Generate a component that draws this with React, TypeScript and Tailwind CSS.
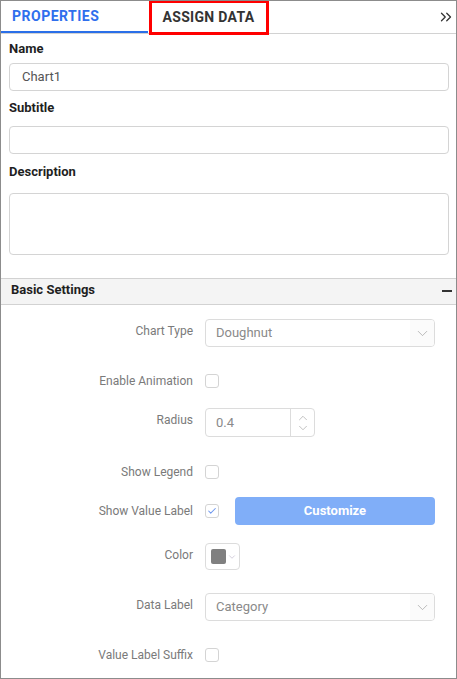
import { ChevronDown, ChevronUp, Check, ChevronsRight } from "lucide-react";

function Checkbox({ checked = false, className = "" }: { checked?: boolean; className?: string }) {
  return (
    <div
      className={`w-[14px] h-[14px] rounded-[3px] border border-[#d4d4d4] bg-white flex items-center justify-center ${className}`}
    >
      {checked && <Check size={10} strokeWidth={2.5} className="text-[#6f98ef]" />}
    </div>
  );
}

function Select({ value }: { value: string }) {
  return (
    <div className="w-[230px] h-[28px] rounded-[4px] border border-[#dcdcdc] bg-white flex items-stretch overflow-hidden">
      <div className="flex-1 pl-[10px] flex items-center text-[13px] text-[#8a8a8a]">{value}</div>
      <div className="w-[24px] bg-[#fbfbfb] flex items-center justify-center">
        <ChevronDown size={17} strokeWidth={1} className="text-[#a0a0a0]" />
      </div>
    </div>
  );
}

function Row({
  label,
  labelPad,
  mt,
  children,
}: {
  label: string;
  labelPad: string;
  mt: string;
  children: React.ReactNode;
}) {
  return (
    <div className={`flex items-start ${mt}`}>
      <div className={`w-[192px] text-right text-[12px] leading-[16px] text-[#7a7a7a] ${labelPad}`}>{label}</div>
      <div className="ml-[12px] flex items-start">{children}</div>
    </div>
  );
}

export default function App() {
  return (
    <div
      className="relative w-[457px] h-[679px] border border-[#8c8c8c] bg-white overflow-hidden"
      style={{ fontFamily: "Roboto, 'Noto Sans', sans-serif" }}
    >
      {/* tabs */}
      <div className="h-[33px] flex border-b border-[#d2d2d2]">
        <div className="w-[147px] pl-[11px] flex items-center border-b-2 border-[#2a6fe8] text-[14px] font-bold tracking-[0.5px] text-[#2f6fed]">
          PROPERTIES
        </div>
        <div className="w-[119px] flex items-center justify-center pl-[2px] text-[14px] font-bold tracking-[0.3px] text-[#333333]">
          ASSIGN DATA
        </div>
        <div className="flex-1 flex items-center justify-end pr-[1px]">
          <ChevronsRight size={18} strokeWidth={1.7} className="text-[#333333]" />
        </div>
      </div>
      <div className="absolute top-[-1px] left-[148px] w-[120px] h-[35px] border-[3px] border-[#ff0000]" />

      {/* general fields */}
      <div className="pl-[8px] pr-[7px]">
        <div className="pt-[5px] text-[13px] leading-[20px] font-bold text-[#1f1f1f]">Name</div>
        <div className="mt-[4px] h-[28px] rounded-[4px] border border-[#d4d4d4] pl-[12px] flex items-center text-[13px] text-[#555555]">
          Chart1
        </div>
        <div className="mt-[7px] text-[13px] leading-[20px] font-bold text-[#1f1f1f]">Subtitle</div>
        <div className="mt-[8px] h-[28px] rounded-[4px] border border-[#d4d4d4]" />
        <div className="mt-[8px] text-[13px] leading-[20px] font-bold text-[#1f1f1f]">Description</div>
        <div className="mt-[11px] h-[62px] rounded-[4px] border border-[#d4d4d4]" />
      </div>

      {/* basic settings header */}
      <div className="mt-[23px] h-[27px] bg-[#f4f4f4] border-y border-[#d2d2d2] pl-[10px] pr-[4px] flex items-start justify-between">
        <span className="text-[13px] leading-[21px] font-bold text-[#1f1f1f]">Basic Settings</span>
        <div className="mt-[11px] w-[10px] h-[2px] bg-[#333333]" />
      </div>

      {/* settings */}
      <Row label="Chart Type" labelPad="pt-[4px]" mt="mt-[14px]">
        <Select value="Doughnut" />
      </Row>
      <Row label="Enable Animation" labelPad="" mt="mt-[26px]">
        <Checkbox className="mt-[1px]" />
      </Row>
      <Row label="Radius" labelPad="pt-[4px]" mt="mt-[19px]">
        <div className="w-[110px] h-[29px] rounded-[4px] border border-[#dcdcdc] flex items-stretch">
          <div className="flex-1 pl-[10px] flex items-center text-[13px] text-[#8a8a8a]">0.4</div>
          <div className="w-[24px] border-l border-[#dcdcdc] flex flex-col items-center justify-center">
            <ChevronUp size={14} strokeWidth={1.1} className="text-[#a0a0a0] -mb-[2px]" />
            <ChevronDown size={14} strokeWidth={1.1} className="text-[#a0a0a0] -mt-[2px]" />
          </div>
        </div>
      </Row>
      <Row label="Show Legend" labelPad="" mt="mt-[27px]">
        <Checkbox className="mt-[1px]" />
      </Row>
      <Row label="Show Value Label" labelPad="pt-[6px]" mt="mt-[17px]">
        <Checkbox checked className="mt-[7px]" />
        <div className="ml-[16px] w-[200px] h-[28px] rounded-[4px] bg-[#80aef8] flex items-center justify-center text-[13px] font-bold text-white">
          Customize
        </div>
      </Row>
      <Row label="Color" labelPad="pt-[4px]" mt="mt-[18px]">
        <div className="w-[35px] h-[27px] rounded-[4px] border border-[#dcdcdc] flex items-center pl-[5px]">
          <div className="w-[15px] h-[15px] rounded-[2px] bg-[#808080]" />
          <ChevronDown size={10} strokeWidth={1.3} className="ml-[1px] text-[#b0a8c0]" />
        </div>
      </Row>
      <Row label="Data Label" labelPad="pt-[4px]" mt="mt-[23px]">
        <Select value="Category" />
      </Row>
      <Row label="Value Label Suffix" labelPad="" mt="mt-[26px]">
        <Checkbox className="mt-[1px]" />
      </Row>
    </div>
  );
}
